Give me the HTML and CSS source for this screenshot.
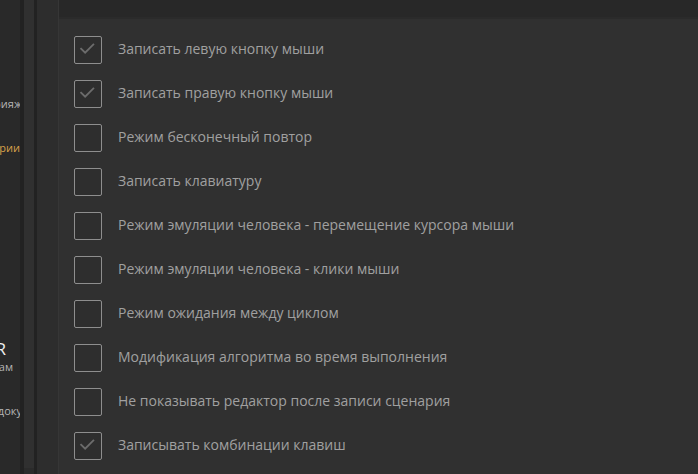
FILE: index.html
```html
<!DOCTYPE html>
<html lang="ru">
<head>
<meta charset="utf-8">
<link rel="stylesheet" href="styles.css">
</head>
<body>
<div class="app">
  <aside class="side">
    <div class="side-text t1">рияж</div>
    <div class="side-text t2">рии</div>
    <div class="side-text t3">R</div>
    <div class="side-text t4">ам</div>
    <div class="side-text t5">доку</div>
  </aside>
  <div class="sep1"></div>
  <div class="scroll"><div class="thumb"></div></div>
  <div class="sep2"></div>
  <div class="gutter"></div>
  <main class="main">
    <div class="header"></div>
    <ul class="list">
      <li class="row"><span class="box checked"><svg viewBox="0 0 28 28"><path d="M7 13 L12 18 L21.5 8.5"/></svg></span><span class="label">Записать левую кнопку мыши</span></li>
      <li class="row"><span class="box checked"><svg viewBox="0 0 28 28"><path d="M7 13 L12 18 L21.5 8.5"/></svg></span><span class="label">Записать правую кнопку мыши</span></li>
      <li class="row"><span class="box"></span><span class="label">Режим бесконечный повтор</span></li>
      <li class="row"><span class="box"></span><span class="label">Записать клавиатуру</span></li>
      <li class="row"><span class="box"></span><span class="label">Режим эмуляции человека - перемещение курсора мыши</span></li>
      <li class="row"><span class="box"></span><span class="label">Режим эмуляции человека - клики мыши</span></li>
      <li class="row"><span class="box"></span><span class="label">Режим ожидания между циклом</span></li>
      <li class="row"><span class="box"></span><span class="label">Модификация алгоритма во время выполнения</span></li>
      <li class="row"><span class="box"></span><span class="label">Не показывать редактор после записи сценария</span></li>
      <li class="row"><span class="box checked"><svg viewBox="0 0 28 28"><path d="M7 13 L12 18 L21.5 8.5"/></svg></span><span class="label">Записывать комбинации клавиш</span></li>
    </ul>
  </main>
</div>
</body>
</html>
```
FILE: styles.css
```css
html, body {
  margin: 0;
  padding: 0;
  background: #303030;
  width: 698px;
  height: 474px;
  overflow: hidden;
  font-family: "Open Sans", "DejaVu Sans", sans-serif;
}
.app {
  display: flex;
  height: 474px;
}
.side {
  width: 20px;
  background: #292929;
  position: relative;
  overflow: hidden;
}
.side-text {
  position: absolute;
  right: 0;
  font-size: 11px;
  color: #b5b5b5;
  white-space: nowrap;
}
.t1 { top: 96px; right: -2px; }
.t2 { top: 140px; color: #d7a24a; }
.t3 { top: 337px; font-size: 17px; color: #f0f0f0; right: 14px; }
.t4 { top: 359px; right: 7px; }
.t5 { top: 403px; right: -2px; }
.sep1 {
  width: 4px;
  background: #222222;
}
.scroll {
  width: 10px;
  background: #2b2b2b;
  display: flex;
  flex-direction: column;
}
.thumb {
  height: 468px;
  background: #303030;
}
.sep2 {
  width: 3px;
  background: #222222;
}
.gutter {
  width: 21px;
  background: #2d2d2d;
  border-right: 1px solid #363636;
}
.main {
  flex: 1;
  display: flex;
  flex-direction: column;
  background: #303030;
}
.header {
  height: 17px;
  background: #282828;
  border-bottom: 2px solid #2b2b2b;
}
.list {
  list-style: none;
  margin: 0;
  padding: 17px 0 0 15px;
  display: flex;
  flex-direction: column;
  gap: 16px;
}
.row {
  display: flex;
  align-items: center;
  height: 28px;
}
.box {
  width: 28px;
  height: 28px;
  box-sizing: border-box;
  border: 1px solid #8e8e8e;
  border-radius: 2px;
  background: #2e2e2e;
  flex: none;
  display: flex;
}
.box svg {
  width: 26px;
  height: 26px;
  margin: -1px;
  overflow: visible;
}
.box svg path {
  fill: none;
  stroke: #6c6c6c;
  stroke-width: 2;
}
.label {
  margin-left: 16px;
  padding-bottom: 3px;
  font-size: 14px;
  color: #a0a0a0;
  white-space: nowrap;
}
```
